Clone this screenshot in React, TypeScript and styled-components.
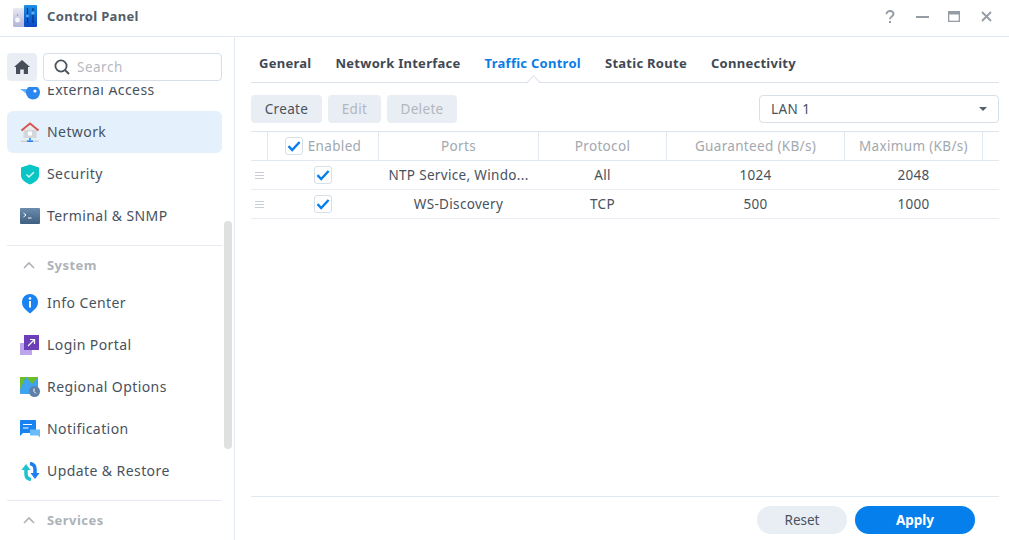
import React from "react";
import styled, { createGlobalStyle } from "styled-components";

const Global = createGlobalStyle`
  html, body { margin: 0; padding: 0; background: #fff; overflow: hidden; }
  * { box-sizing: border-box; }
  body { font-family: "Noto Sans", "DejaVu Sans", sans-serif; color: #414b55; font-size: 13px; letter-spacing: 0.3px; }
`;

const Win = styled.div`
  width: 1009px; height: 540px; display: flex; flex-direction: column; background: #fff; overflow: hidden;
`;
const TitleBar = styled.header`
  height: 37px; flex: none; display: flex; align-items: center; padding: 0 14px 3px 13px; gap: 8px;
  border-bottom: 1px solid #e3e9f1;
`;
const Title = styled.div`
  font-weight: 700; font-size: 13px; color: #525d69; flex: 1; letter-spacing: 0.33px; padding-bottom: 2px;
`;
const WinBtns = styled.div`
  display: flex; align-items: center; gap: 14px;
`;
const WinBtn = styled.span`
  width: 18px; height: 18px; display: flex; align-items: center; justify-content: center; color: #969ca5;
`;
const Body = styled.div`
  flex: 1; display: flex; min-height: 0;
`;
const Sidebar = styled.aside`
  width: 235px; flex: none; border-right: 1px solid #e3e9f1; display: flex; flex-direction: column; position: relative;
`;
const SearchRow = styled.div`
  display: flex; gap: 6px; padding: 16px 12px 0 7px; flex: none;
`;
const HomeBtn = styled.div`
  width: 30px; height: 28px; border-radius: 4px; background: #e9edf4; display: flex; align-items: center; justify-content: center;
`;
const SearchBox = styled.div`
  flex: 1; height: 28px; border: 1px solid #d7dfe9; border-radius: 4px; display: flex; align-items: center; gap: 7px; padding-left: 10px;
  color: #b5bac1; font-size: 13.5px; letter-spacing: 0.5px;
`;
const NavClip = styled.div`
  flex: 1; overflow: hidden; margin-top: 6px; padding: 0 12px 0 7px;
`;
const NavList = styled.div`
  margin-top: -18px; display: flex; flex-direction: column;
`;
const NavRow = styled.div<{ $active?: boolean }>`
  height: 42px; flex: none; display: flex; align-items: center; gap: 7px; padding-left: 13px; border-radius: 6px;
  background: ${(p) => (p.$active ? "#e4f0fc" : "transparent")}; font-size: 14px; color: #48525d; letter-spacing: 0.42px;
`;
const NavLabel = styled.span`
  padding-bottom: 2px;
`;
const IconSlot = styled.span`
  width: 20px; height: 20px; display: flex; align-items: center; justify-content: center; flex: none;
`;
const Divider = styled.div`
  height: 1px; background: #e6ebf3; margin-top: 8px;
`;
const SectionHead = styled.div`
  height: 36px; flex: none; display: flex; align-items: center; gap: 12px; padding: 2px 0 0 16px; font-weight: 700; font-size: 13px; color: #adb2b9; letter-spacing: 0.45px;
`;
const Scrollbar = styled.div`
  position: absolute; left: 224px; top: 184px; width: 8px; height: 228px; border-radius: 4px; background: #e0e0e0;
`;
const Main = styled.main`
  flex: 1; min-width: 0; display: flex; flex-direction: column; padding: 0 10px 6px 16px;
`;
const Tabs = styled.nav`
  height: 46px; flex: none; display: flex; gap: 24px; padding: 6px 0 0 8px; align-items: center; border-bottom: 1px solid #d9e2ec; position: relative;
`;
const Tab = styled.div<{ $active?: boolean }>`
  font-weight: 700; font-size: 13px; letter-spacing: 0.27px; color: ${(p) => (p.$active ? "#0a7ce6" : "#3f4953")}; position: relative; height: 100%; display: flex; align-items: center;
  ${(p) =>
    p.$active
      ? `&::after { content: ""; position: absolute; left: 50%; bottom: -4px; width: 8px; height: 8px; margin-left: -4px; background: #fff; border-left: 1px solid #d9e2ec; border-top: 1px solid #d9e2ec; transform: rotate(45deg); }`
      : ""}
`;
const Toolbar = styled.div`
  display: flex; align-items: center; gap: 6px; padding-top: 12px; height: 40px; flex: none;
`;
const Btn = styled.button<{ $disabled?: boolean; $w: number }>`
  height: 28px; padding: 0; border: 0; border-radius: 4px; background: #e9edf4; font: inherit; font-size: 13.5px; letter-spacing: 0.35px;
  color: ${(p) => (p.$disabled ? "#b2b7be" : "#48525d")};
  width: ${(p) => p.$w}px;
`;
const Spacer = styled.div`flex: 1;`;
const Select = styled.div`
  width: 240px; height: 28px; border: 1px solid #d7dfe9; border-radius: 4px; display: flex; align-items: center; justify-content: space-between; padding: 0 11px 0 11px; font-size: 13.5px; letter-spacing: 0.45px; color: #48525d;
`;
const Caret = styled.span`
  width: 0; height: 0; border-left: 4.5px solid transparent; border-right: 4.5px solid transparent; border-top: 4.5px solid #565f6a;
`;
const Table = styled.div`
  margin-top: 8px; border-top: 1px solid #dde4ed; flex: 1; font-size: 13.5px; letter-spacing: 0.33px;
`;
const gridCols = "17px 111px 160px 128px 178px 138px 16px";
const HeadRow = styled.div`
  display: grid; grid-template-columns: ${gridCols}; height: 29px; border-bottom: 1px solid #e3e9f1; color: #a2a8b0;
`;
const HCell = styled.div<{ $border?: boolean }>`
  display: flex; align-items: center; justify-content: center; gap: 5px; border-right: ${(p) => (p.$border === false ? "0" : "1px solid #e3e9f1")};
`;
const Row = styled.div`
  display: grid; grid-template-columns: ${gridCols}; height: 29px; border-bottom: 1px solid #e8edf3; color: #48525d;
`;
const Cell = styled.div`
  display: flex; align-items: center; justify-content: center; white-space: nowrap; padding-right: 1px;
`;
const CheckBox = styled.span`
  width: 18px; height: 18px; border: 1px solid #d7dfe9; border-radius: 3px; background: #fff; display: flex; align-items: center; justify-content: center;
`;
const Footer = styled.div`
  height: 38px; flex: none; border-top: 1px solid #e3e9f1; display: flex; justify-content: flex-end; align-items: flex-end; gap: 8px; padding-right: 24px;
`;
const Pill = styled.button<{ $primary?: boolean }>`
  height: 28px; border: 0; border-radius: 14px; font: inherit; font-size: 13.5px; padding: 0;
  width: ${(p) => (p.$primary ? 120 : 90)}px;
  font-weight: ${(p) => (p.$primary ? 700 : 400)};
  background: ${(p) => (p.$primary ? "#057fec" : "#e9edf4")};
  color: ${(p) => (p.$primary ? "#fff" : "#48525d")};
`;
const Handle = styled.span`
  width: 9px; height: 7px; border-top: 1px solid #c9ced6; border-bottom: 1px solid #c9ced6; position: relative;
  &::after { content: ""; position: absolute; left: 0; right: 0; top: 2px; height: 1px; background: #c9ced6; }
`;

const Check = () => (
  <svg width="14" height="12" viewBox="0 0 14 12"><path d="M1.500 6.200 5.200 10 12.600 2" fill="none" stroke="#057fec" strokeWidth="2.400" /></svg>
);
const Chevron = () => (
  <svg width="12" height="8" viewBox="0 0 12 8"><path d="M1 7 6 2l5 5" fill="none" stroke="#adb2b9" strokeWidth="1.600" /></svg>
);

const AppIcon = () => (
  <svg width="26" height="24" viewBox="0 0 26 24">
    <defs>
      <linearGradient id="cpL" x1="0" y1="0" x2="0" y2="1"><stop offset="0" stopColor="#e8eaf4" /><stop offset="1" stopColor="#b0b4d6" /></linearGradient>
      <linearGradient id="cpR" x1="0" y1="0" x2="0" y2="1"><stop offset="0" stopColor="#1e8fe6" /><stop offset="1" stopColor="#0a47c4" /></linearGradient>
    </defs>
    <rect x="0" y="3" width="12" height="19" rx="1.500" fill="url(#cpL)" />
    <rect x="11" y="0" width="13" height="22" rx="1" fill="url(#cpR)" />
    <circle cx="4.500" cy="15" r="2.400" fill="#f8f8fb" />
    <circle cx="4.500" cy="10" r="0.700" fill="#8a8ea8" />
    <path d="M14.500 3v15M20 3v15" stroke="#0c2f78" strokeWidth="1.100" />
    <circle cx="20" cy="8" r="1.700" fill="#52b4f2" />
    <circle cx="14.500" cy="11" r="1.400" fill="#52b4f2" />
  </svg>
);
const ExternalIcon = () => (
  <svg width="20" height="20" viewBox="0 0 20 20">
    <path d="M0 9h8l3 8z" fill="#62b2f4" />
    <circle cx="13" cy="12.500" r="7" fill="#2b86f0" />
    <circle cx="15" cy="11" r="1.600" fill="#fff" />
  </svg>
);
const NetworkIcon = () => (
  <svg width="20" height="21" viewBox="0 0 20 21">
    <path d="M3.500 7h13v9h-13z" fill="#d3d6db" />
    <path d="M1.500 8.500 10 1.500l8.500 7" fill="none" stroke="#d9534a" strokeWidth="2" />
    <path d="M10 3 16 8H4z" fill="#e9e9ec" />
    <rect x="8" y="9.500" width="4" height="4" fill="#fff" />
    <rect x="9.200" y="16" width="1.600" height="3" fill="#1e82ee" />
    <rect x="1" y="18.500" width="18" height="1.500" fill="#cdd1d6" />
    <rect x="7" y="18.500" width="6" height="1.500" fill="#1e82ee" />
  </svg>
);
const SecurityIcon = () => (
  <svg width="20" height="21" viewBox="0 0 20 21">
    <path d="M10 .5 19 3.500v8c0 4-4 7-9 9-5-2-9-5-9-9v-8z" fill="#08c6c6" />
    <path d="M6.500 10.500 9 13l4.800-4.800" fill="none" stroke="#d9f6f4" strokeWidth="1.500" />
  </svg>
);
const TerminalIcon = () => (
  <svg width="20" height="16" viewBox="0 0 20 16">
    <defs><linearGradient id="tm" x1="0" y1="0" x2="0" y2="1"><stop offset="0" stopColor="#6b8cad" /><stop offset="1" stopColor="#3f5f82" /></linearGradient></defs>
    <rect width="20" height="16" rx="1" fill="url(#tm)" />
    <path d="M3.500 5 6 7 3.500 9" fill="none" stroke="#fff" strokeWidth="1" />
    <path d="M8 10h3.500" stroke="#fff" strokeWidth="1" />
  </svg>
);
const InfoIcon = () => (
  <svg width="18" height="21" viewBox="0 0 18 21">
    <path d="M9 20.500C5 17 1 14.500 1 9a8 8 0 0 1 16 0c0 5.500-4 8-8 11.500z" fill="#1a83f2" />
    <circle cx="9" cy="5.500" r="1.300" fill="#fff" />
    <rect x="8" y="8" width="2" height="6.500" fill="#fff" />
  </svg>
);
const LoginIcon = () => (
  <svg width="20" height="20" viewBox="0 0 20 20">
    <rect x="0" y="8" width="12" height="12" fill="#bda5ec" />
    <rect x="4" y="0" width="15" height="15" fill="#6a3fb8" />
    <path d="M8 11 14 5M10 4.500h4.500V9" fill="none" stroke="#fff" strokeWidth="1.200" />
  </svg>
);
const RegionalIcon = () => (
  <svg width="20" height="20" viewBox="0 0 20 20">
    <rect x="0" y="0" width="18" height="17" fill="#3fa3ee" />
    <path d="M0 0h6L0 12zM6 0h12L12 7z" fill="#6bbd2a" />
    <circle cx="14.500" cy="14.500" r="5.500" fill="#5d80aa" />
    <path d="M14 11.500v3l2 2" fill="none" stroke="#fff" strokeWidth="1" />
  </svg>
);
const NotificationIcon = () => (
  <svg width="20" height="18" viewBox="0 0 20 18">
    <path d="M0 1a1 1 0 0 1 1-1h14a1 1 0 0 1 1 1v12H3l-3 3z" fill="#1a83f2" />
    <path d="M3 4.500h9M3 8h5.500" stroke="#fff" strokeWidth="1.100" />
    <path d="M10 9.500h10v8l-2-2h-8z" fill="#68bcf8" />
  </svg>
);
const UpdateIcon = () => (
  <svg width="19" height="19" viewBox="0 0 19 19">
    <path d="M5 8v4c0 3 2 5 5 5.500" fill="none" stroke="#1fc3cf" strokeWidth="3.500" />
    <path d="M.5 8 5 2l4.500 6z" fill="#1fc3cf" />
    <path d="M14 11V7c0-3-2-5-5-5.500" fill="none" stroke="#1a7ff0" strokeWidth="3.500" />
    <path d="M9.500 11 14 17l4.500-6z" fill="#1a7ff0" />
  </svg>
);

const navTop: [string, React.ReactNode, boolean?][] = [
  ["External Access", <ExternalIcon />],
  ["Network", <NetworkIcon />, true],
  ["Security", <SecurityIcon />],
  ["Terminal & SNMP", <TerminalIcon />],
];
const navSystem: [string, React.ReactNode][] = [
  ["Info Center", <InfoIcon />],
  ["Login Portal", <LoginIcon />],
  ["Regional Options", <RegionalIcon />],
  ["Notification", <NotificationIcon />],
  ["Update & Restore", <UpdateIcon />],
];
const rows = [
  ["NTP Service, Windo...", "All", "1024", "2048"],
  ["WS-Discovery", "TCP", "500", "1000"],
];

export default function App() {
  return (
    <Win>
      <Global />
      <TitleBar>
        <AppIcon />
        <Title>Control Panel</Title>
        <WinBtns>
          <WinBtn>
            <svg width="10" height="14" viewBox="0 0 10 14"><path d="M1.500 4.200C1.500 2.200 3 1 5 1s3.500 1.200 3.500 3c0 2.600-3.500 2.600-3.500 5.200" fill="none" stroke="currentColor" strokeWidth="1.900" /><rect x="4" y="11" width="2" height="2" fill="currentColor" /></svg>
          </WinBtn>
          <WinBtn><svg width="13" height="2" viewBox="0 0 13 2"><rect width="13" height="2" fill="currentColor" /></svg></WinBtn>
          <WinBtn><svg width="12" height="11" viewBox="0 0 12 11"><path d="M0 0h12v11H0z" fill="currentColor" /><path d="M1.300 3.500h9.400v6.200H1.300z" fill="#fff" /></svg></WinBtn>
          <WinBtn><svg width="11" height="11" viewBox="0 0 11 11"><path d="M1 1l9 9M10 1l-9 9" stroke="currentColor" strokeWidth="1.800" /></svg></WinBtn>
        </WinBtns>
      </TitleBar>
      <Body>
        <Sidebar>
          <SearchRow>
            <HomeBtn>
              <svg width="16" height="14" viewBox="0 0 16 14"><path d="M8 0 16 7h-2v7H9.800V9.500H6.200V14H2V7H0z" fill="#454e59" /></svg>
            </HomeBtn>
            <SearchBox>
              <svg width="16" height="16" viewBox="0 0 16 16"><circle cx="7" cy="7" r="5.600" fill="none" stroke="#4b555f" strokeWidth="1.800" /><path d="M11 11 15 15" stroke="#4b555f" strokeWidth="2" /></svg>
              <span>Search</span>
            </SearchBox>
          </SearchRow>
          <NavClip>
            <NavList>
              {navTop.map(([t, i, a]) => (
                <NavRow key={t} $active={a}><IconSlot>{i}</IconSlot><NavLabel>{t}</NavLabel></NavRow>
              ))}
              <Divider />
              <SectionHead><Chevron />System</SectionHead>
              {navSystem.map(([t, i]) => (
                <NavRow key={t}><IconSlot>{i}</IconSlot><NavLabel>{t}</NavLabel></NavRow>
              ))}
              <Divider />
              <SectionHead><Chevron />Services</SectionHead>
            </NavList>
          </NavClip>
          <Scrollbar />
        </Sidebar>
        <Main>
          <Tabs>
            <Tab>General</Tab>
            <Tab>Network Interface</Tab>
            <Tab $active>Traffic Control</Tab>
            <Tab>Static Route</Tab>
            <Tab>Connectivity</Tab>
          </Tabs>
          <Toolbar>
            <Btn $w={71}>Create</Btn>
            <Btn $w={53} $disabled>Edit</Btn>
            <Btn $w={70} $disabled>Delete</Btn>
            <Spacer />
            <Select>LAN 1<Caret /></Select>
          </Toolbar>
          <Table>
            <HeadRow>
              <HCell />
              <HCell><CheckBox><Check /></CheckBox>Enabled</HCell>
              <HCell>Ports</HCell>
              <HCell>Protocol</HCell>
              <HCell>Guaranteed (KB/s)</HCell>
              <HCell>Maximum (KB/s)</HCell>
              <HCell $border={false} />
            </HeadRow>
            {rows.map((r) => (
              <Row key={r[0]}>
                <Cell><Handle /></Cell>
                <Cell><CheckBox><Check /></CheckBox></Cell>
                {r.map((c) => <Cell key={c}>{c}</Cell>)}
                <Cell />
              </Row>
            ))}
          </Table>
          <Footer>
            <Pill>Reset</Pill>
            <Pill $primary>Apply</Pill>
          </Footer>
        </Main>
      </Body>
    </Win>
  );
}
